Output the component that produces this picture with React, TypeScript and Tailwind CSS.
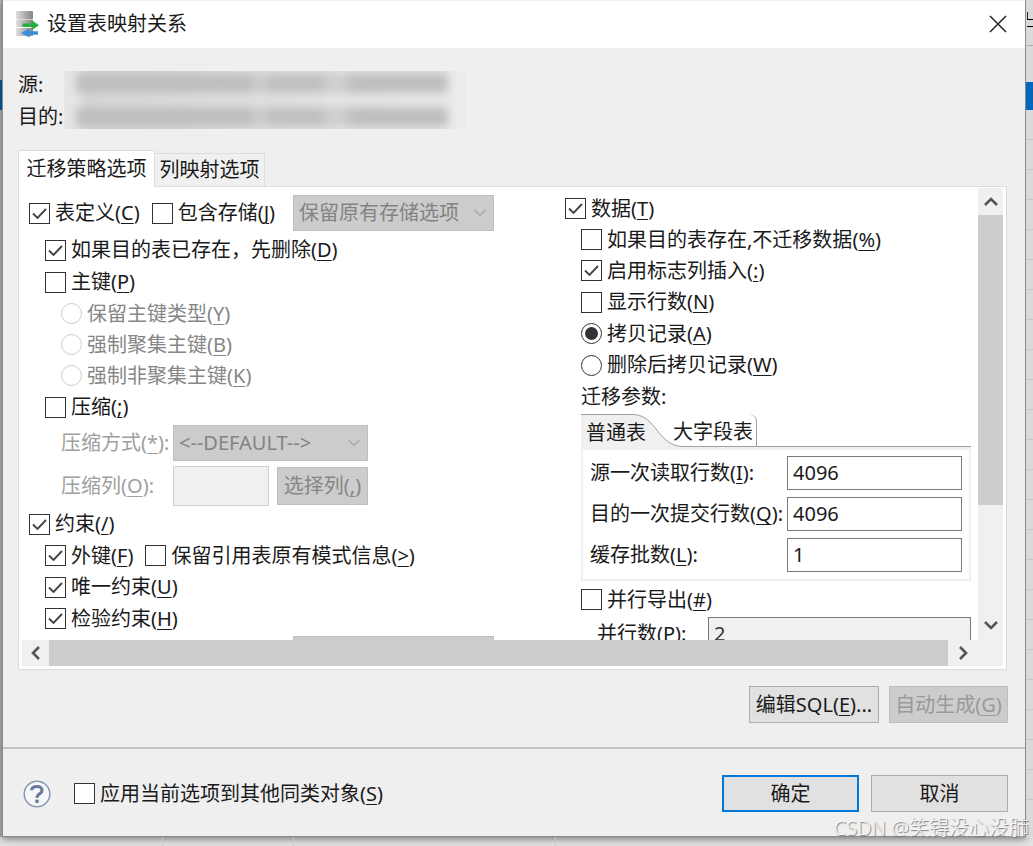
import React from 'react';

interface MnemonicProps {
  text: string;
  k: string;
  suffix?: string;
}

// Label text followed by its underlined access key
const Mnemonic: React.FC<MnemonicProps> = ({ text, k, suffix = '' }) => (
  <span className="whitespace-nowrap">
    {text}(<span className="underline decoration-1 underline-offset-3">{k}</span>){suffix}
  </span>
);

interface OptionProps {
  text: string;
  k: string;
  checked?: boolean;
  disabled?: boolean;
}

const CheckOption: React.FC<OptionProps> = ({ text, k, checked = false }) => (
  <label className="flex items-center gap-[5px]">
    <span className="grid shrink-0 *:col-start-1 *:row-start-1">
      <input
        type="checkbox"
        defaultChecked={checked}
        className="peer h-[21px] w-[21px] appearance-none border border-[#333] bg-white"
      />
      <svg viewBox="0 0 21 21" className="pointer-events-none invisible h-[21px] w-[21px] peer-checked:visible">
        <path d="M4 10.5l4.5 4.5L17 6" fill="none" stroke="#444" strokeWidth="1.9" />
      </svg>
    </span>
    <Mnemonic text={text} k={k} />
  </label>
);

interface RadioProps extends OptionProps {
  name: string;
}

const RadioOption: React.FC<RadioProps> = ({ text, k, name, checked = false, disabled = false }) => (
  <label className={disabled ? 'flex items-center gap-[5px] text-[#868686]' : 'flex items-center gap-[5px]'}>
    <span className="grid shrink-0 place-items-center *:col-start-1 *:row-start-1">
      <input
        type="radio"
        name={name}
        defaultChecked={checked}
        disabled={disabled}
        className="peer h-[21px] w-[21px] appearance-none rounded-full border border-[#333] bg-white disabled:border-[#ccc]"
      />
      <span className="pointer-events-none invisible h-[13px] w-[13px] rounded-full bg-[#333] peer-checked:visible" />
    </span>
    <Mnemonic text={text} k={k} />
  </label>
);

interface ComboProps {
  label: string;
  value: string;
  id?: string;
  className: string;
}

const Combo: React.FC<ComboProps> = ({ label, value, id, className }) => (
  <span className={`grid h-9 shrink-0 items-center *:col-start-1 *:row-start-1 ${className}`}>
    <select
      id={id}
      aria-label={label}
      disabled
      className="h-9 w-full appearance-none border border-[#bfbfbf] bg-[#ccc] px-[5px] text-[#838383]"
    >
      <option>{value}</option>
    </select>
    <svg viewBox="0 0 12 8" className="pointer-events-none mr-2 h-2 w-3 justify-self-end">
      <path d="M0.5 1l5.5 5.5L11.5 1" fill="none" stroke="#a5a5a5" strokeWidth="1.2" />
    </svg>
  </span>
);

const Arrow: React.FC<{ d: string }> = ({ d }) => (
  <svg viewBox="0 0 14 14" className="h-3.5 w-3.5">
    <path d={d} fill="none" stroke="#555" strokeWidth="2.6" />
  </svg>
);

const AppIcon = () => (
  <svg viewBox="0 0 24 28" className="h-7 w-6 shrink-0">
    <defs>
      <linearGradient id="disk" x1="0" x2="1">
        <stop offset="0" stopColor="#e0e0e0" />
        <stop offset="0.6" stopColor="#a8a8a8" />
        <stop offset="1" stopColor="#858585" />
      </linearGradient>
    </defs>
    <rect x="1" y="1" width="17" height="8" rx="1" fill="url(#disk)" />
    <rect x="1" y="9.500" width="17" height="7.500" rx="1" fill="url(#disk)" />
    <rect x="1" y="18" width="17" height="8" rx="1" fill="url(#disk)" />
    <path d="M7.500 13.500h9v-3.500L24 15.200l-7.500 5V17h-9z" fill="#27ad42" />
    <path d="M23 21.200h-8.500V18.500L6 23l8.500 4.500v-2.700H23z" fill="#3c8ddb" />
  </svg>
);

const HelpIcon = () => (
  <svg viewBox="0 0 28 28" className="h-7 w-7">
    <circle cx="14" cy="14" r="12.800" fill="#f6f7f9" stroke="#8796b0" strokeWidth="1.500" />
    <path
      d="M8.500 10.200C9 7.500 11 6.500 14 6.500s5 1.500 5 4c0 3.500-5 3-5 7.200"
      fill="none"
      stroke="#6a7c9c"
      strokeWidth="3.200"
    />
    <rect x="12.300" y="19.500" width="3.500" height="3.500" rx="1" fill="#6a7c9c" />
  </svg>
);

// One unreadable line: host and schema names
const RedactedLine = () => (
  <div className="flex h-5 w-[372px] shrink-0 blur-[5px]">
    <span className="w-44 bg-[#bebebe]" />
    <span className="w-4 bg-[#cbcbcb]" />
    <span className="w-14 bg-[#c0c0c0]" />
    <span className="w-6 bg-[#cecece]" />
    <span className="flex-1 bg-[#bebebe]" />
  </div>
);

const Redacted = () => (
  <div className="flex h-[58px] w-[402px] flex-col gap-3.5 overflow-hidden bg-linear-to-r from-[#e6e6e6] from-3% via-[#d8d8d8] via-6% to-[#ececec] pt-0.5 pl-3">
    <RedactedLine />
    <RedactedLine />
  </div>
);

const params = [
  { id: 'read-rows', text: '源一次读取行数', k: 'I', value: '4096' },
  { id: 'commit-rows', text: '目的一次提交行数', k: 'Q', value: '4096' },
  { id: 'batches', text: '缓存批数', k: 'L', value: '1' },
];

const DefinitionOptions = () => (
  <div className="w-[536px] shrink-0 pt-[7px]">
    <div className="flex h-9 items-center gap-3">
      <CheckOption text="表定义" k="C" checked />
      <CheckOption text="包含存储" k="J" />
      <Combo label="存储选项" value="保留原有存储选项" className="ml-1.5 w-[201px]" />
    </div>
    <div className="pt-[3px] pl-4">
      <div className="flex h-8 items-center">
        <CheckOption text="如果目的表已存在，先删除" k="D" checked />
      </div>
      <div className="flex h-8 items-center">
        <CheckOption text="主键" k="P" />
      </div>
      <div className="pl-4">
        <div className="flex h-[31px] items-center">
          <RadioOption name="key" text="保留主键类型" k="Y" disabled />
        </div>
        <div className="flex h-[31px] items-center">
          <RadioOption name="key" text="强制聚集主键" k="B" disabled />
        </div>
        <div className="flex h-[31px] items-center">
          <RadioOption name="key" text="强制非聚集主键" k="K" disabled />
        </div>
      </div>
      <div className="flex h-8 items-center">
        <CheckOption text="压缩" k=";" />
      </div>
      <div className="grid grid-cols-[112px_1fr] items-center gap-y-[5px] pt-0.5 pl-4 text-[#a0a0a0]">
        <label htmlFor="compress-mode">
          <Mnemonic text="压缩方式" k="*" suffix=":" />
        </label>
        <Combo id="compress-mode" label="压缩方式" value="<--DEFAULT-->" className="w-[195px]" />
        <label htmlFor="compress-column">
          <Mnemonic text="压缩列" k="O" suffix=":" />
        </label>
        <div className="flex items-center gap-2">
          <input id="compress-column" disabled className="h-10 w-24 border border-[#d0d0d0] bg-[#f0f0f0]" />
          <button disabled className="h-[38px] w-[91px] border border-[#bfbfbf] bg-[#ccc] text-[#868686]">
            <Mnemonic text="选择列" k="," />
          </button>
        </div>
      </div>
    </div>
    <div className="mt-0.5 flex h-8 items-center">
      <CheckOption text="约束" k="/" checked />
    </div>
    <div className="pl-4">
      <div className="flex h-[31px] items-center gap-3">
        <CheckOption text="外键" k="F" checked />
        <CheckOption text="保留引用表原有模式信息" k=">" />
      </div>
      <div className="flex h-8 items-center">
        <CheckOption text="唯一约束" k="U" checked />
      </div>
      <div className="flex h-[31px] items-center">
        <CheckOption text="检验约束" k="H" checked />
      </div>
      <div className="pt-0.5 pl-[248px]">
        <Combo label="索引选项" value="" className="w-[201px]" />
      </div>
    </div>
  </div>
);

const DataOptions = () => (
  <div className="min-w-0 flex-1 pt-[5px] pr-[7px]">
    <div className="flex h-[31px] items-center">
      <CheckOption text="数据" k="T" checked />
    </div>
    <div className="pl-4">
      <div className="flex h-[31px] items-center">
        <CheckOption text="如果目的表存在,不迁移数据" k="%" />
      </div>
      <div className="flex h-[31px] items-center">
        <CheckOption text="启用标志列插入" k=":" checked />
      </div>
      <div className="flex h-8 items-center">
        <CheckOption text="显示行数" k="N" />
      </div>
      <div className="flex h-[31px] items-center">
        <RadioOption name="copy" text="拷贝记录" k="A" checked />
      </div>
      <div className="flex h-8 items-center">
        <RadioOption name="copy" text="删除后拷贝记录" k="W" />
      </div>
      <div className="flex h-[31px] items-center">迁移参数:</div>

      {/* Parameter tabs */}
      <div className="mt-0.5 flex h-[33px]">
        <button className="relative w-[92px] shrink-0 pt-1 pl-[5px] text-left">
          <svg viewBox="0 0 102 33" className="pointer-events-none absolute top-0 left-0 z-10 h-[33px] w-[102px]">
            <path d="M0 0.500H52C76 1 76 32 102 32.500V33H0z" fill="#f0f0f0" />
            <path d="M0 0.500H52C76 1 76 32 102 32.500" fill="none" stroke="#a0a0a0" />
          </svg>
          <span className="relative z-20">普通表</span>
        </button>
        <button className="w-[84px] shrink-0 rounded-tr-lg border-r border-b border-[#a0a0a0] pt-1 text-left">
          大字段表
        </button>
        <span className="flex-1 border-b border-[#a0a0a0]" />
      </div>
      <div className="flex flex-col gap-[7px] border-2 border-t-3 border-[#f0f0f0] px-[7px] pt-1.5 pb-[7px]">
        {params.map((p) => (
          <div key={p.id} className="flex items-center">
            <label htmlFor={p.id} className="w-[197px] shrink-0">
              <Mnemonic text={p.text} k={p.k} suffix=":" />
            </label>
            <input
              id={p.id}
              defaultValue={p.value}
              className="h-[34px] min-w-0 flex-1 border border-[#7a7a7a] bg-white px-[5px] pb-0.5"
            />
          </div>
        ))}
      </div>

      <div className="mt-[3px] flex h-[31px] items-center">
        <CheckOption text="并行导出" k="#" />
      </div>
      <div className="flex items-center pt-0.5 pl-4">
        <label htmlFor="parallel" className="w-[111px] shrink-0">
          <Mnemonic text="并行数" k="P" suffix=":" />
        </label>
        <input
          id="parallel"
          defaultValue="2"
          disabled
          className="h-[34px] min-w-0 flex-1 border border-[#7a7a7a] bg-[#f0f0f0] px-[5px] pb-0.5 text-[#333]"
        />
      </div>
    </div>
  </div>
);

const App: React.FC = () => {
  return (
    <div className="relative flex h-screen min-h-[640px] flex-col overflow-hidden bg-[#e2e2e2] font-['Noto_Sans','Noto_Sans_CJK_SC',sans-serif] text-[20px] leading-6 text-[#1a1a1a]">
      <div className="flex min-h-0 flex-1">
        {/* Window behind the dialog, left edge */}
        <div className="w-0.5 bg-[#b5b5b5] pt-20">
          <div className="h-[30px] bg-[#0a5ca8]" />
        </div>

        <div className="flex min-w-0 flex-1 flex-col border border-t-0 border-[#8a8a8a] bg-[#efefef] shadow-[0_2px_7px_#0007]">
          {/* Title bar */}
          <header className="flex h-12 shrink-0 items-center gap-2 border-t border-[#f0f0f0] bg-white pr-[18px] pb-0.5 pl-3">
            <AppIcon />
            <h1 className="flex-1">设置表映射关系</h1>
            <button aria-label="关闭">
              <svg viewBox="0 0 18 18" className="h-[18px] w-[18px]">
                <path d="M1 1l16 16M17 1L1 17" stroke="#222" strokeWidth="1.500" />
              </svg>
            </button>
          </header>

          <main className="flex min-h-0 flex-1 flex-col pr-[17px] pl-[15px]">
            <div className="flex pt-[21px]">
              <div className="w-[46px] shrink-0 leading-8">
                <p>源:</p>
                <p>目的:</p>
              </div>
              <div className="pt-0.5">
                <Redacted />
              </div>
            </div>

            <div role="tablist" className="flex items-end pt-[17px]">
              <button
                role="tab"
                aria-selected="true"
                className="z-10 -mb-px h-[37px] w-[137px] border border-b-0 border-[#dcdcdc] bg-white whitespace-nowrap"
              >
                迁移策略选项
              </button>
              <button
                role="tab"
                aria-selected="false"
                className="h-[33px] w-[110px] border border-b-0 border-l-0 border-[#dcdcdc] bg-[#f0f0f0] whitespace-nowrap"
              >
                列映射选项
              </button>
            </div>

            {/* Scrollable option panel */}
            <section className="mr-px grid min-h-0 flex-1 grid-cols-[minmax(0,1fr)_25px] grid-rows-[minmax(0,1fr)_26px] border border-[#dcdcdc] bg-white px-[3px] pt-px pb-[3px]">
              <div className="flex overflow-hidden pl-[7px]">
                <DefinitionOptions />
                <DataOptions />
              </div>
              <div className="flex flex-col items-center bg-[#f0f0f0]">
                <button aria-label="向上滚动" className="flex h-[27px] shrink-0 items-center">
                  <Arrow d="M1 10l6-6 6 6" />
                </button>
                <div className="h-[290px] w-full bg-[#cdcdcd]" />
                <button aria-label="向下滚动" className="mt-auto flex h-[30px] shrink-0 items-center">
                  <Arrow d="M1 4l6 6 6-6" />
                </button>
              </div>
              <div className="flex items-center bg-[#f0f0f0]">
                <button aria-label="向左滚动" className="flex w-[27px] shrink-0 justify-center">
                  <Arrow d="M10 1L4 7l6 6" />
                </button>
                <div className="h-full flex-1 bg-[#cdcdcd]" />
                <button aria-label="向右滚动" className="flex w-[30px] shrink-0 justify-center">
                  <Arrow d="M4 1l6 6-6 6" />
                </button>
              </div>
              <div className="bg-[#f0f0f0]" />
            </section>

            <div className="flex justify-end gap-2.5 pt-4 pb-6">
              <button className="h-[37px] w-[130px] border border-[#adadad] bg-[#e1e1e1] whitespace-nowrap">
                <Mnemonic text="编辑SQL" k="E" suffix="..." />
              </button>
              <button disabled className="h-[37px] w-[119px] border border-[#bfbfbf] bg-[#ccc] whitespace-nowrap text-[#999]">
                <Mnemonic text="自动生成" k="G" />
              </button>
            </div>
          </main>

          <footer className="flex h-[89px] shrink-0 items-center gap-3 border-t-2 border-[#c4c4c4] pt-0.5 pr-[17px] pl-5">
            <button aria-label="帮助" className="mr-[11px]">
              <HelpIcon />
            </button>
            <div className="flex-1">
              <CheckOption text="应用当前选项到其他同类对象" k="S" />
            </div>
            <button className="h-[37px] w-[137px] border-2 border-[#0078d7] bg-[#e1e1e1]">确定</button>
            <button className="h-[37px] w-[137px] border border-[#adadad] bg-[#e1e1e1]">取消</button>
          </footer>
        </div>

        {/* Window behind the dialog, right edge */}
        <div className="w-[7px] bg-[#dadada]">
          <div className="ml-px h-[46px] border-b border-[#aab] pt-3">
            <div className="h-[7px] w-px bg-[#223]" />
            <div className="h-2 border-y border-black" />
          </div>
          <div className="mt-9 h-7 bg-[#0067c0]" />
          {Array.from({ length: 23 }, (_, i) => (
            <div key={i} className="h-[30px] border-b border-[#c8c8c8]" />
          ))}
        </div>
      </div>

      {/* Window behind the dialog, bottom edge */}
      <div className="flex h-[9px] shrink-0">
        <span className="w-[163px] border-r border-[#c8c8c8]" />
        <span className="w-[131px] border-r border-[#c8c8c8]" />
        <span className="w-[262px] border-r border-[#c8c8c8]" />
      </div>

      <p className="absolute right-1 bottom-1.5 font-light whitespace-nowrap text-[#f4f4f4] [text-shadow:1px_1px_1px_#777]">
        CSDN @笑锝没心没肺
      </p>
    </div>
  );
};

export default App;
